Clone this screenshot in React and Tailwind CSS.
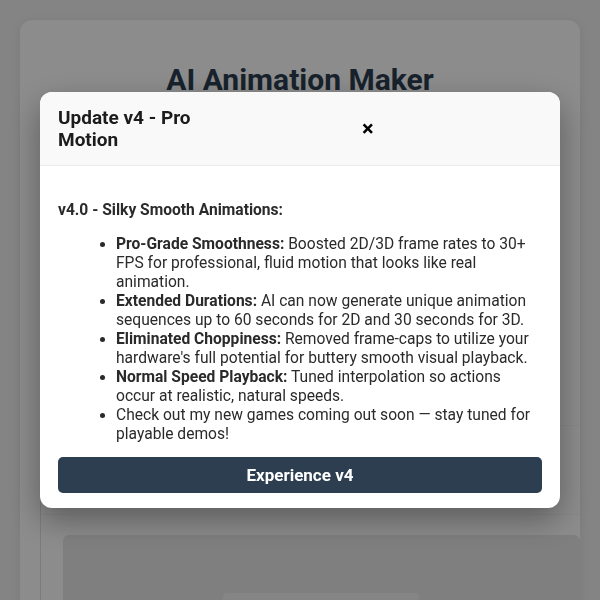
import React from "react";

const features = [
  {
    title: "Pro-Grade Smoothness:",
    text: " Boosted 2D/3D frame rates to 30+ FPS for professional, fluid motion that looks like real animation.",
  },
  {
    title: "Extended Durations:",
    text: " AI can now generate unique animation sequences up to 60 seconds for 2D and 30 seconds for 3D.",
  },
  {
    title: "Eliminated Choppiness:",
    text: " Removed frame-caps to utilize your hardware's full potential for buttery smooth visual playback.",
  },
  {
    title: "Normal Speed Playback:",
    text: " Tuned interpolation so actions occur at realistic, natural speeds.",
  },
];

export default function App() {
  return (
    <div
      className="relative h-[600px] w-[600px] overflow-hidden bg-[#f0f0f0]"
      style={{ fontFamily: "Roboto, 'Noto Sans', sans-serif" }}
    >
      {/* App page behind the dialog */}
      <div className="ml-[20px] mt-[20px] h-[620px] w-[560px] rounded-[12px] bg-white pl-[20px] pt-[42px] shadow-[0_2px_10px_rgba(0,0,0,0.08)]">
        <h1 className="pr-[20px] text-center text-[30px] font-bold leading-[36px] text-[#2c3e50]">
          AI Animation Maker
        </h1>
        <div className="mt-[60px] h-[540px] border-l border-[#e2e2e2]">
          <div className="h-[267px]" />
          <div className="h-[90px] border-y border-[#f7f7f7]" />
          <div className="ml-[22px] mt-[20px] h-[200px] rounded-[6px] bg-[#e8e8e8] pt-[58px]">
            <div className="ml-[160px] h-[30px] w-[196px] rounded-[4px] bg-[#f2f2f2]" />
          </div>
        </div>
      </div>

      {/* Update dialog */}
      <div className="fixed inset-0 flex items-center justify-center bg-black/45">
        <div className="w-[520px] overflow-hidden rounded-[12px] bg-white shadow-[0_12px_32px_rgba(0,0,0,0.35)]">
          <div className="flex h-[74px] items-center border-b border-[#ececec] bg-[#f9f9f9] px-[18px]">
            <h2 className="w-[160px] text-[19px] font-bold leading-[22px] text-[#1c1c1c]">
              Update v4 - Pro Motion
            </h2>
            <button className="ml-[144px] text-[22px] font-bold leading-none text-black">
              ×
            </button>
          </div>
          <div className="px-[18px] pb-[15px] pt-[19px] text-[15.6px] leading-[19px] text-[#2a2a2a]">
            <p className="mt-[16px] font-bold">v4.0 - Silky Smooth Animations:</p>
            <ul className="mb-[13px] mt-[15px] list-disc pl-[58px]">
              {features.map((f) => (
                <li key={f.title}>
                  <strong className="font-bold">{f.title}</strong>
                  {f.text}
                </li>
              ))}
              <li>Check out my new games coming out soon — stay tuned for playable demos!</li>
            </ul>
            <button className="h-[36px] w-full rounded-[5px] bg-[#2c3e50] text-[17px] font-bold text-white">
              Experience v4
            </button>
          </div>
        </div>
      </div>
    </div>
  );
}
